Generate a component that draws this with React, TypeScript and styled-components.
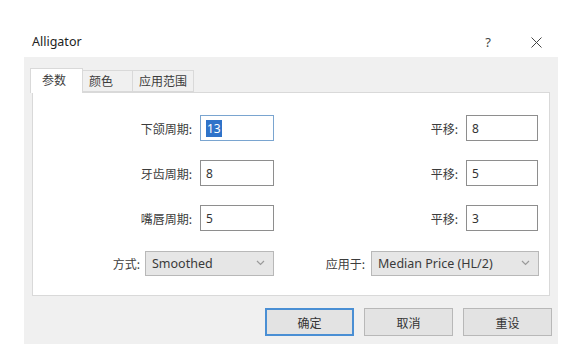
import React from 'react';
import styled, { createGlobalStyle } from 'styled-components';

const GlobalStyle = createGlobalStyle`
  html, body {
    margin: 0;
    padding: 0;
    background: #ffffff;
  }
  body {
    font-family: 'Noto Sans', 'Noto Sans CJK SC', sans-serif;
    color: #1e1e1e;
  }
`;

const Window = styled.div`
  width: 582px;
  height: 344px;
  background: #ffffff;
  display: flex;
  flex-direction: column;
  overflow: hidden;
`;

const TitleBar = styled.div`
  height: 57px;
  box-sizing: border-box;
  padding: 33px 36px 0 32px;
  display: flex;
  align-items: flex-start;
  gap: 31px;
`;

const Title = styled.div`
  flex: 1;
  font-size: 12.5px;
  line-height: 18px;
  color: #222;
`;

const TitleButton = styled.div<{ $w: number }>`
  width: ${(p) => p.$w}px;
  height: 18px;
  display: flex;
  align-items: center;
  justify-content: center;
  font-size: 13px;
  line-height: 18px;
  color: #444;
`;

const Body = styled.div`
  flex: 1;
  margin: 0 24px;
  background: #f0f0f0;
  padding: 11px 8px 0 8px;
  display: flex;
  flex-direction: column;
`;

const TabStrip = styled.div`
  height: 24px;
  display: flex;
  margin-left: -2px;
  position: relative;
  z-index: 1;
`;

const Tab = styled.div<{ $active?: boolean; $w: number }>`
  width: ${(p) => p.$w}px;
  box-sizing: border-box;
  margin-top: ${(p) => (p.$active ? 0 : 2)}px;
  height: ${(p) => (p.$active ? 25 : 22)}px;
  margin-right: -1px;
  border: 1px solid #d9d9d9;
  border-bottom: ${(p) => (p.$active ? 'none' : '1px solid #d9d9d9')};
  background: ${(p) => (p.$active ? '#ffffff' : '#f0f0f0')};
  font-family: 'Noto Sans CJK SC', sans-serif;
  font-size: 12px;
  line-height: ${(p) => (p.$active ? 22 : 19)}px;
  padding-left: ${(p) => (p.$active ? 11 : 6)}px;
  color: #3c3c3c;
`;

const Panel = styled.div`
  height: 204px;
  box-sizing: border-box;
  border: 1px solid #d9d9d9;
  background: #ffffff;
  padding-top: 22px;
  display: flex;
  flex-direction: column;
  gap: 19px;
`;

const Row = styled.div<{ $cols: string }>`
  display: grid;
  grid-template-columns: ${(p) => p.$cols};
  align-items: center;
  height: 26px;
`;

const Label = styled.div<{ $pad: number }>`
  text-align: right;
  padding-right: ${(p) => p.$pad}px;
  font-family: 'Noto Sans CJK SC', sans-serif;
  font-size: 12px;
  color: #3c3c3c;
`;

const Input = styled.div<{ $focused?: boolean }>`
  height: 26px;
  box-sizing: border-box;
  border: 1px solid ${(p) => (p.$focused ? '#7aa5d0' : '#8e8e8e')};
  background: #ffffff;
  padding-left: 5px;
  display: flex;
  align-items: center;
  font-size: 12px;
  color: #333;
`;

const Selected = styled.span`
  background: #2f73c9;
  color: #fff;
  padding: 0 1px;
  line-height: 17px;
`;

const Combo = styled.div`
  height: 25px;
  box-sizing: border-box;
  border: 1px solid #b8b8b8;
  background: #e6e6e6;
  display: flex;
  align-items: center;
  padding: 0 8px 0 6px;
  font-size: 12.5px;
  color: #3a3a3a;
  span {
    flex: 1;
  }
`;

const Buttons = styled.div`
  display: flex;
  justify-content: flex-end;
  gap: 10px;
  margin: 12px -2px 0 0;
`;

const Button = styled.div<{ $primary?: boolean }>`
  width: 89px;
  height: 28px;
  box-sizing: border-box;
  border: ${(p) => (p.$primary ? '2px solid #4a8fd4' : '1px solid #b8b8b8')};
  background: #e3e3e3;
  display: flex;
  align-items: center;
  justify-content: center;
  font-family: 'Noto Sans CJK SC', sans-serif;
  font-size: 12px;
  color: #333;
`;

const Chevron = () => (
  <svg width="9" height="6" viewBox="0 0 9 6">
    <path d="M1 1l3.5 3.5L8 1" fill="none" stroke="#9a9a9a" strokeWidth="1.2" />
  </svg>
);

const CloseIcon = () => (
  <svg width="11" height="11" viewBox="0 0 11 11">
    <path d="M0.5 0.5l10 10M10.5 0.5l-10 10" fill="none" stroke="#444" strokeWidth="1" />
  </svg>
);

const FIELD_COLS = '167px 74px 192px 72px';
const COMBO_COLS = '112px 129px 97px 168px';

const rows = [
  { label: '下颌周期:', value: '13', shift: '8', focused: true },
  { label: '牙齿周期:', value: '8', shift: '5' },
  { label: '嘴唇周期:', value: '5', shift: '3' },
];

export default function App() {
  return (
    <Window>
      <GlobalStyle />
      <TitleBar>
        <Title>Alligator</Title>
        <TitleButton $w={14}>?</TitleButton>
        <TitleButton $w={20}>
          <CloseIcon />
        </TitleButton>
      </TitleBar>
      <Body>
        <TabStrip>
          <Tab $active $w={53}>参数</Tab>
          <Tab $w={51}>颜色</Tab>
          <Tab $w={62}>应用范围</Tab>
        </TabStrip>
        <Panel>
          {rows.map((r) => (
            <Row key={r.label} $cols={FIELD_COLS}>
              <Label $pad={8}>{r.label}</Label>
              <Input $focused={r.focused}>
                {r.focused ? <Selected>{r.value}</Selected> : r.value}
              </Input>
              <Label $pad={8}>平移:</Label>
              <Input>{r.shift}</Input>
            </Row>
          ))}
          <Row $cols={COMBO_COLS}>
            <Label $pad={5}>方式:</Label>
            <Combo>
              <span>Smoothed</span>
              <Chevron />
            </Combo>
            <Label $pad={6}>应用于:</Label>
            <Combo>
              <span>Median Price (HL/2)</span>
              <Chevron />
            </Combo>
          </Row>
        </Panel>
        <Buttons>
          <Button $primary>确定</Button>
          <Button>取消</Button>
          <Button>重设</Button>
        </Buttons>
      </Body>
    </Window>
  );
}
